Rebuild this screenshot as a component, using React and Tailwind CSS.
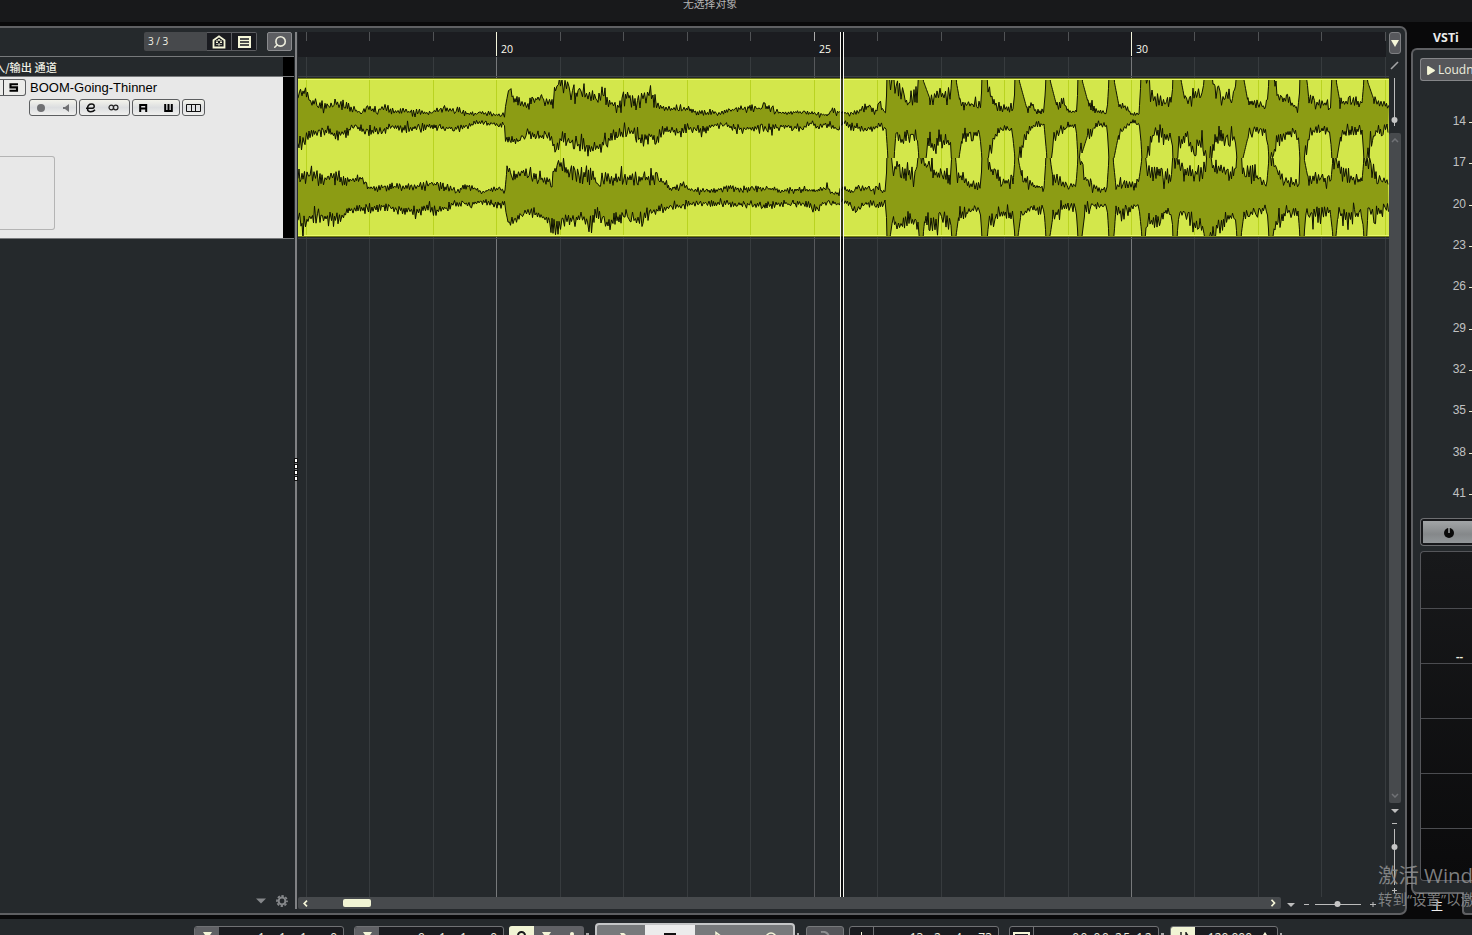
import { FaPlay } from "react-icons/fa";
import { Search } from "lucide-react";

const RULER_START = 298;
const BARS = [306, 369, 433, 496, 560, 623, 687, 750, 814, 877, 941, 1004, 1068, 1131, 1194, 1258, 1321, 1385];
const LABELS = [{ x: 501, n: 20 }, { x: 819, n: 25 }, { x: 1136, n: 30 }];
const LEVELS = [14, 17, 20, 23, 26, 29, 32, 35, 38, 41];

// outline of each channel: x,y pairs, y on a rail (80 / 158 / 236) means clipped
const LEFT_TOP = "298,96 302,94 306,89 310,102 328,105 338,103 345,104 353,109 360,113 367,107 377,111 385,106 392,111 428,113 445,109 458,110 468,114 485,113 498,115 505,113 507,95 510,88 513,99 528,105 538,98 553,103 554,90 561,84 568,88 575,95 583,92 590,100 603,93 610,103 617,107 628,95 635,104 643,97 650,93 657,105 665,109 687,109 700,113 720,113 740,108 760,107 770,108 780,113 793,112 817,114 828,115 833,108 838,112 852,114 863,109 871,105 875,114 879,102 883,113 886,112 887,80 889,80 891,90 893,80 895,84 902,91 908,105 913,95 917,96 918,80 923,80 930,99 937,93 945,96 951,92 952,80 956,80 960,102 968,105 981,106 982,80 987,80 990,90 993,102 1002,108 1014,110 1015,80 1019,80 1027,109 1032,104 1035,111 1044,112 1046,80 1050,80 1057,107 1063,101 1068,112 1077,111 1078,80 1082,80 1088,102 1098,112 1107,113 1109,80 1114,80 1119,106 1125,107 1132,114 1139,114 1141,80 1146,80 1151,98 1162,101 1172,99 1173,80 1181,80 1185,101 1193,97 1203,94 1204,80 1212,80 1216,91 1223,98 1234,96 1236,80 1244,80 1248,102 1257,103 1267,106 1269,80 1274,80 1278,98 1287,100 1297,108 1299,106 1300,80 1307,80 1309,102 1323,104 1331,104 1332,80 1336,80 1340,102 1362,103 1364,80 1367,80 1374,100 1380,105 1389,104";
const LEFT_BOTTOM = "298,142 301,149 308,137 318,131 328,132 335,135 348,131 354,126 365,131 381,131 392,127 405,129 428,126 445,128 458,128 478,123 495,125 504,124 506,139 510,142 522,138 528,133 540,137 551,136 555,150 561,139 575,142 580,147 592,150 603,144 612,137 623,133 633,132 642,142 650,134 657,143 663,130 680,132 688,128 700,131 713,125 727,126 737,129 757,128 767,129 783,126 803,128 812,123 817,127 825,124 838,129 843,123 850,126 865,129 872,128 880,126 886,129 888,158 894,158 896,132 902,141 912,137 917,135 919,158 926,156 928,140 935,150 939,134 943,142 950,142 952,158 959,158 962,138 972,133 980,136 982,158 988,158 990,148 995,136 1002,129 1012,129 1015,158 1018,158 1022,150 1026,134 1035,125 1044,124 1047,158 1051,158 1053,145 1058,133 1065,127 1076,125 1078,158 1082,153 1088,134 1098,125 1107,126 1109,158 1114,158 1119,133 1125,128 1133,122 1140,125 1142,158 1146,158 1150,145 1154,132 1165,138 1172,134 1173,158 1177,158 1182,140 1187,134 1190,150 1197,145 1203,143 1206,158 1210,156 1214,145 1218,136 1225,140 1235,138 1237,158 1243,158 1248,137 1257,128 1267,133 1269,158 1275,150 1278,138 1287,133 1298,131 1300,158 1304,158 1307,146 1310,132 1322,130 1330,131 1332,158 1337,158 1341,134 1362,130 1364,158 1368,155 1372,140 1377,131 1389,128";
const RIGHT_TOP = "298,177 308,173 315,176 323,180 335,175 345,181 362,178 368,188 388,187 422,186 438,184 448,189 458,190 468,186 482,192 495,189 505,190 507,169 513,177 523,171 535,178 552,180 555,164 561,164 565,170 577,174 593,177 600,184 606,173 613,180 620,178 637,179 650,178 658,177 670,189 683,185 692,191 713,191 727,187 740,189 757,188 773,189 783,191 800,190 815,191 827,187 832,193 838,194 842,188 850,192 860,187 872,190 878,187 883,193 886,188 887,158 891,158 893,172 897,164 903,170 910,172 914,180 917,162 919,158 921,158 924,164 935,172 942,178 950,176 952,158 955,158 957,174 965,181 968,185 981,186 982,158 987,158 992,171 1002,180 1013,184 1015,158 1018,158 1022,178 1028,183 1035,186 1044,188 1046,158 1050,158 1053,178 1065,184 1076,185 1078,158 1082,160 1085,178 1093,185 1102,190 1107,187 1109,158 1113,158 1116,187 1122,181 1132,187 1139,180 1142,158 1145,158 1148,173 1160,174 1172,178 1173,158 1177,160 1182,172 1190,174 1205,171 1207,158 1210,158 1213,167 1223,170 1235,175 1237,158 1241,158 1243,175 1253,174 1262,181 1267,181 1269,158 1273,160 1277,172 1290,183 1299,184 1300,158 1304,158 1308,178 1323,179 1331,180 1333,158 1336,163 1343,174 1353,179 1362,181 1364,158 1367,160 1373,173 1383,179 1389,182";
const RIGHT_BOTTOM = "298,218 302,227 310,217 318,217 332,218 343,217 348,210 362,210 382,206 398,209 412,211 428,209 438,211 455,203 472,204 485,201 495,205 505,204 507,218 510,224 525,211 538,215 548,220 556,228 562,221 575,219 583,217 590,229 598,212 605,225 613,222 623,215 630,215 637,222 642,220 650,212 667,208 683,206 693,203 710,203 720,204 750,204 763,206 787,203 803,204 817,209 823,203 833,202 838,204 843,200 850,205 857,209 865,203 883,206 886,199 887,236 890,236 892,222 900,226 907,221 915,222 918,226 919,236 923,236 925,217 932,223 943,221 951,223 952,236 956,236 959,214 968,211 980,208 982,236 987,236 990,221 1002,213 1013,216 1015,236 1018,236 1021,214 1032,209 1044,209 1046,236 1050,236 1053,216 1065,206 1076,208 1078,236 1082,236 1085,212 1095,205 1107,205 1109,236 1114,236 1116,207 1122,216 1133,205 1139,207 1142,236 1145,236 1148,222 1157,222 1165,212 1172,213 1173,236 1177,236 1179,214 1187,214 1193,224 1203,228 1205,236 1209,236 1217,226 1225,220 1235,214 1237,236 1241,236 1244,214 1257,213 1267,208 1269,236 1272,236 1278,220 1287,212 1298,211 1300,236 1304,236 1306,212 1313,216 1330,210 1333,236 1336,236 1338,214 1350,217 1362,213 1364,236 1367,236 1368,205 1372,216 1378,213 1389,207";

function trace(data, center, up, seed) {
    const pts = data.split(" ").map(p => p.split(",").map(Number));
    const rail = y => (up ? y <= center - 38 : y >= center + 38);
    let s = seed;
    const rand = () => {
        s = (s * 16807) % 2147483647;
        return s / 2147483647;
    };
    const out = [];
    let k = 0;
    let side = 1;
    let x = 298;
    while (x <= 1389) {
        while (k < pts.length - 2 && pts[k + 1][0] <= x) k++;
        const [x0, y0] = pts[k];
        const [x1, y1] = pts[k + 1];
        let y = y0 + ((y1 - y0) * (x - x0)) / (x1 - x0);
        const steep = Math.abs(y1 - y0) > 18;
        if (rail(y)) {
            y = up ? center - 44 : center + 44;
        } else if (!steep) {
            const loud = x < 350 || (x > 550 && x < 665) || x > 886;
            const amp = Math.min(loud ? 9 : 5, Math.abs(y - center) * 0.42) + 0.8;
            const r = rand();
            const spike = rand() > 0.9 ? 1.5 : 1;
            y += side * (0.15 + 0.85 * r * r) * amp * spike;
        }
        side = rand() > 0.12 ? -side : side;
        out.push([x, Number(y.toFixed(1))]);
        x += steep ? 0.5 : rand() > 0.45 ? 1 : 1.5;
    }
    return out;
}

const line = pts => pts.map(p => p.join(",")).join(" ");

function Channel({ top, bottom, center, y, height, seed }) {
    const a = trace(top, center, true, seed);
    const b = trace(bottom, center, false, seed + 77);
    return (
        <svg x="298" y={y} width="1091" height={height} viewBox={`298 ${y} 1091 ${height}`}>
            <polygon points={line([...a, ...b.slice().reverse()])} fill="#8c9c14" />
            <polyline points={line(a)} fill="none" stroke="#0d1002" strokeWidth="1" />
            <polyline points={line(b)} fill="none" stroke="#0d1002" strokeWidth="1" />
        </svg>
    );
}

function Arrangement() {
    return (
        <svg className="block" width="1091" height="840" viewBox="298 57 1091 840">
            {BARS.map(x => (
                <rect key={x} x={x} y="57" width="1" height="840" fill={x === 496 || x === 1131 ? "#77797b" : x === 814 ? "#57595c" : "#373b3e"} />
            ))}
            <rect x="298" y="76" width="1091" height="1" fill="#3e4144" />
            <rect x="298" y="238" width="1091" height="1" fill="#3e4144" />
            <rect x="298" y="78" width="1091" height="159" fill="#737f13" />
            <rect x="298" y="79" width="1091" height="157" fill="#eafa6a" />
            <rect x="298" y="80" width="1091" height="155" fill="#d3e74b" />
            {BARS.map(x => <rect key={x} x={x} y="80" width="1" height="155" fill="#b9d321" />)}
            <Channel top={LEFT_TOP} bottom={LEFT_BOTTOM} center={118} y={80} height={78} seed={4211} />
            <Channel top={RIGHT_TOP} bottom={RIGHT_BOTTOM} center={196.5} y={158} height={78} seed={9137} />
        </svg>
    );
}

function Ruler() {
    return (
        <div className="relative h-[25px] w-[1088px] bg-[#1b1c20]">
            {BARS.map(x => (
                <i
                    key={x}
                    className={x === 496 || x === 1131 ? "absolute top-0 h-[24px] w-px bg-[#f4f5dc]" : x === 814 ? "absolute top-0 h-[9px] w-px bg-[#aaa]" : "absolute top-0 h-[9px] w-px bg-[#505255]"}
                    style={{ left: x - RULER_START }}
                />
            ))}
            {LABELS.map(l => (
                <span key={l.n} className="absolute top-[10px] text-[10.5px] leading-[14px] font-medium text-[#fbfbee]" style={{ left: l.x - RULER_START }}>{l.n}</span>
            ))}
        </div>
    );
}

function Pill({ className, children }) {
    return (
        <div className={`flex h-[17px] items-center rounded-[3px] border border-[#5c5e60] bg-linear-to-b from-[#f4f4ec] via-[#dcdee0] to-[#f0f0ee] text-black ${className}`}>
            {children}
        </div>
    );
}

function TrackList() {
    return (
        <div className="flex h-full w-[295px] shrink-0 flex-col">
            <div className="flex h-[28px] items-start pt-[4px] pl-[144px]">
                <div className="flex h-[19px] w-[113px] overflow-hidden rounded-[2px] bg-[#47494c] text-[10px] text-[#f2f2e6]">
                    <span className="w-[63px] pl-[4px] leading-[19px] font-medium">3 / 3</span>
                    <div className="flex w-[50px] rounded-r-[2px] border border-l-0 border-[#5b5c60] bg-[#1a1b20]">
                        <div className="flex w-[25px] items-center justify-center border-r border-[#5b5c60]">
                            <svg width="14" height="14" viewBox="0 0 14 14">
                                <path d="M1.5 5.3 7 1.3l5.5 4v7.2h-11z" fill="none" stroke="#f5f6d8" strokeWidth="1.8" />
                                <path d="M7 4v2M7 8.500v2M4 7.300h2M8 7.300h2" stroke="#f5f6d8" strokeWidth="1.5" />
                                <path d="M4.500 5.500h1M8.500 5.500h1M4.500 9.500h1M8.500 9.500h1" stroke="#f5f6d8" />
                            </svg>
                        </div>
                        <div className="flex flex-1 items-center justify-center">
                            <svg width="13" height="12" viewBox="0 0 13 12">
                                <path d="M0 0h13v12H0z" fill="#f5f6d8" />
                                <path d="M2 3h9M2 6h9M2 9h9" stroke="#15161b" strokeWidth="1.6" />
                            </svg>
                        </div>
                    </div>
                </div>
                <div className="ml-[10px] flex h-[19px] w-[25px] items-center justify-center rounded-[2px] border border-[#8a8b8e] bg-[#5d5e62]">
                    <Search className="size-[14px] -scale-x-100 text-[#ececdc]" strokeWidth={2.8} />
                </div>
            </div>
            <div className="mr-px h-px bg-[#77797b]" />
            <div className="mr-px flex h-[19px] overflow-hidden">
                <div className="w-[283px] shrink-0 overflow-hidden">
                    <div className="-ml-[6px] font-['Noto_Sans_CJK_SC',sans-serif] text-[11.2px] leading-[20px] font-medium whitespace-nowrap text-[#efefe4]">入/输出 通道</div>
                </div>
                <div className="flex-1 bg-black" />
            </div>
            <div className="mr-px h-px bg-[#77797b]" />
            <div className="mr-px flex h-[161px]">
                <div className="w-[283px] bg-[#e8e8e8]">
                    <div className="flex h-[22px] pt-[2px]">
                        <div className="flex h-[17px] w-[26px] rounded-r-[3px] border border-l-0 border-[#5c5e60] bg-[#ececea]">
                            <div className="w-[4px] border-r border-[#3b3c3e]" />
                            <svg className="mt-[3px] ml-[5px]" width="10" height="9" viewBox="0 0 10 9">
                                <path d="M9 1.2H1.500v3.200H8v3.300H.5" fill="none" stroke="#000" strokeWidth="2.1" />
                            </svg>
                        </div>
                        <span className="ml-[4px] font-['Liberation_Sans',Arial,sans-serif] text-[13px] leading-[17px] text-black">BOOM-Going-Thinner</span>
                    </div>
                    <div className="flex gap-[2px] pl-[29px]">
                        <Pill className="w-[48px] justify-between pr-[7px] pl-[7px]">
                            <svg width="8" height="8"><circle cx="4" cy="4" r="4" fill="#707173" /></svg>
                            <svg width="6" height="8" viewBox="0 0 6 8"><path d="M0 3h2l4-3v8L2 5H0z" fill="#707173" /></svg>
                        </Pill>
                        <Pill className="w-[51px] gap-[12px] pl-[6px]">
                            <svg width="10" height="10" viewBox="0 0 10 10"><path d="M0 5.200H6.500C9 5 8.800 1 5.800 1 3 1 1.500 3.300 1.500 5.800c0 2 1.300 3 3.200 3 2 0 3.300-.8 4.300-2" fill="none" stroke="#111" strokeWidth="1.5" /></svg>
                            <svg width="11" height="7" viewBox="0 0 11 7"><circle cx="3.300" cy="3.500" r="2.300" fill="none" stroke="#222" strokeWidth="1.200" /><circle cx="7.700" cy="3.500" r="2.300" fill="none" stroke="#222" strokeWidth="1.200" /></svg>
                        </Pill>
                        <Pill className="w-[48px] justify-between pr-[6px] pl-[6px]">
                            <svg width="9" height="8" viewBox="0 0 9 8"><path d="M1.200 8V1h6v3.500H1.200M7.200 5v3" fill="none" stroke="#000" strokeWidth="2" /></svg>
                            <svg width="9" height="8" viewBox="0 0 9 8"><path d="M1.200 0v7h6.600V0M4.500 0v7" fill="none" stroke="#000" strokeWidth="2" /></svg>
                        </Pill>
                        <Pill className="w-[23px] justify-center">
                            <svg width="15" height="8" viewBox="0 0 15 8"><path d="M.5.500h14v7H.5zM5.500.500v7M9.500.500v7" fill="none" stroke="#111" /></svg>
                        </Pill>
                    </div>
                    <div className="mt-[40px] h-[74px] w-[55px] rounded-r-[3px] border-[1.5px] border-l-0 border-[#b4b4b4]" />
                </div>
                <div className="flex-1 bg-black" />
            </div>
            <div className="mr-px h-px bg-[#77797b]" />
            <div className="flex-1" />
            <div className="flex h-[20px] items-center justify-end gap-[10px] pr-[7px] pb-[5px] text-[#85878a]">
                <svg width="10" height="6"><path d="M0 .5h10L5 5.500z" fill="currentColor" /></svg>
                <svg width="12" height="12" viewBox="0 0 12 12" fill="none" stroke="currentColor">
                    <circle cx="6" cy="6" r="3.400" strokeWidth="2" />
                    <circle cx="6" cy="6" r="5" strokeWidth="1.800" strokeDasharray="2.400 1.527" strokeDashoffset="1.200" />
                </svg>
            </div>
        </div>
    );
}

function VerticalTools() {
    return (
        <div className="flex w-[12px] flex-col items-center text-[#bdbdbd]">
            <div className="flex h-[22px] w-[12px] items-center justify-center rounded-[3px] border border-[#7e7f82] bg-[#57585c]">
                <svg width="8" height="7"><path d="M0 0h8L4 7z" fill="#f5f6d8" /></svg>
            </div>
            <svg className="mt-[7px] mr-px" width="9" height="9"><path d="M1 8 8 1" stroke="#a3a4a6" strokeWidth="1.600" /></svg>
            <svg className="mt-[8px]" width="8" height="48"><path d="M3.500 0v48" stroke="#bcbcbc" /><circle cx="3.500" cy="42" r="3" fill="#c6c6c6" /></svg>
            <div className="mt-[7px] flex h-[670px] w-[12px] flex-col items-center justify-between rounded-[2px] bg-[#474a4d] py-[5px]">
                <svg width="8" height="5"><path d="m1 4 3-3 3 3" fill="none" stroke="#707276" strokeWidth="1.500" /></svg>
                <svg width="8" height="5"><path d="m1 1 3 3 3-3" fill="none" stroke="#707276" strokeWidth="1.500" /></svg>
            </div>
            <svg className="mt-[6px]" width="8" height="4"><path d="M0 0h8L4 4z" fill="currentColor" /></svg>
            <i className="mt-[10px] mr-px h-px w-[5px] bg-[#bdbdbd]" />
            <svg className="mt-[5px]" width="8" height="56"><path d="M3.500 0v56" stroke="#bcbcbc" /><circle cx="3.500" cy="18" r="3" fill="#c6c6c6" /></svg>
            <svg className="mt-[3px] mr-px" width="5" height="5"><path d="M2.500 0v5M0 2.500h5" stroke="#bcbcbc" /></svg>
        </div>
    );
}

function BottomTools() {
    return (
        <div className="flex h-[12px] items-center">
            <div className="ml-px flex h-[12px] w-[983px] items-center rounded-[2px] bg-[#474a4d]">
                <svg className="ml-[5px]" width="5" height="7"><path d="M4 .7 1.200 3.500 4 6.300" fill="none" stroke="#f5f6d8" strokeWidth="1.700" /></svg>
                <div className="ml-[35px] h-[8px] w-[28px] rounded-[2px] bg-[#f1f4d4]" />
                <svg className="mr-[5px] ml-auto" width="6" height="8"><path d="M1.500.700 4.500 4l-3 3.300" fill="none" stroke="#f5f6d8" strokeWidth="1.700" /></svg>
            </div>
            <svg className="mt-[3px] ml-[6px]" width="8" height="4"><path d="M0 0h8L4 4z" fill="#bdbdbd" /></svg>
            <i className="mt-[3px] ml-[9px] h-px w-[5px] bg-[#bdbdbd]" />
            <svg className="mt-[2px] ml-[6px]" width="46" height="8"><path d="M0 4.500h46" stroke="#bcbcbc" /><circle cx="22.500" cy="4" r="3" fill="#c6c6c6" /></svg>
            <svg className="mt-[2px] ml-[9px]" width="6" height="5"><path d="M3 0v5M0 2.500h6" stroke="#bcbcbc" /></svg>
        </div>
    );
}

function Meter() {
    return (
        <div className="flex w-[65px] flex-col overflow-hidden pl-[4px]">
            <div className="h-[22px] pl-[22px] font-['Open_Sans','Noto_Sans',sans-serif] text-[12.400px] leading-[23px] font-bold text-[#ececec]">VSTi</div>
            <div className="flex h-[846px] w-[80px] flex-col rounded-l-[6px] border-2 border-r-0 border-[#5f6063] bg-[#25292c] pl-[7px]">
                <div className="mt-[8px] flex h-[23px] items-center rounded-l-[3px] border border-r-0 border-[#858689] bg-[#55565a] pt-px pl-[6px] text-[12px] text-[#ededdf]">
                    <FaPlay className="mr-[3px] h-[9px] w-[8px] shrink-0 text-[#f5f6d8]" />Loudness
                </div>
                <div className="mt-[21px] flex h-[413.300px] flex-col">
                    {LEVELS.map(n => (
                        <div key={n} className="flex h-[41.330px] items-start">
                            <span className="-mt-[1px] h-[40px] w-[46px] text-right font-['Liberation_Sans',Arial,sans-serif] text-[12px] leading-[40px] text-[#c0c1c2]">{n}</span>
                            <i className="mt-[20px] ml-[3px] h-px w-[6px] bg-[#e6e7cb]" />
                        </div>
                    ))}
                </div>
                <div className="mt-[2.700px] h-[28px] shrink-0 rounded-l-[4px] border border-r-0 border-[#6d6e71] bg-[#17181b] p-[2px] pr-0">
                    <div className="flex h-[22px] items-center bg-linear-to-b from-[#a2a5a7] via-[#85888a] via-60% to-[#93979a] pt-[2px] pl-[20px]">
                        <svg width="12" height="12"><circle cx="6" cy="6" r="5" fill="#0a0a0a" /><path d="M6 0v6" stroke="#a0a3a5" strokeWidth="1.500" /></svg>
                    </div>
                </div>
                <div className="mt-[5px] h-[330px] shrink-0 rounded-l-[4px] border border-r-0 border-[#55565a] bg-linear-to-b from-[#18191b] to-[#0b0b0c]">
                    <div className="h-[57px] border-b border-[#4b4c50]" />
                    <div className="h-[55px] border-b border-[#4b4c50] pt-[40px] pl-[35px] text-[11px] leading-[14px] font-bold text-[#ededdf]">--</div>
                    <div className="h-[55px] border-b border-[#4b4c50]" />
                    <div className="h-[55px] border-b border-[#4b4c50]" />
                    <div className="h-[55px] border-b border-[#4b4c50]" />
                </div>
            </div>
            <div className="flex h-[21px] pl-[20px] font-['Noto_Sans_CJK_SC',sans-serif] text-[12px] leading-[22px] text-[#f0f0f0]">
                主<div className="-mt-[2px] ml-[19px] h-[23px] w-[20px] shrink-0 rounded-bl-[4px] border-b-2 border-l-2 border-[#5f6063] bg-[#25292c]" />
            </div>
        </div>
    );
}

function Field({ className, icon, iconClass, children }) {
    return (
        <div className={`mt-[7px] flex h-[24px] shrink-0 overflow-hidden rounded-t-[3px] border border-[#707174] bg-[#1a1b1f] ${className}`}>
            <div className={`flex w-[24px] shrink-0 justify-center pt-[5px] ${iconClass}`}>{icon}</div>
            <div className="flex flex-1 justify-end pt-[2px] text-[12px] leading-[17px] text-[#f0f0e0]">{children}</div>
        </div>
    );
}

function Position({ parts }) {
    return parts.map((p, i) => (
        <span key={i} className={i === 3 ? "w-[29px] pr-[6px] text-right" : "w-[21px] text-center"}>{p}</span>
    ));
}

const down = <svg width="9" height="9"><path d="M0 0h9L4.500 7z" fill="#f5f6d8" /></svg>;

function Transport() {
    return (
        <div className="flex h-[16px] overflow-hidden bg-[#25292c]">
            <Field className="ml-[194px] w-[150px]" icon={down} iconClass="bg-[#606165]"><Position parts={[1, 1, 1, 0]} /></Field>
            <Field className="ml-[10px] w-[150px]" icon={down} iconClass="bg-[#606165]"><Position parts={[9, 1, 1, 0]} /></Field>
            <div className="mt-[7px] ml-[5px] flex h-[24px] w-[75px] overflow-hidden rounded-t-[3px] bg-[#606165]">
                <div className="flex w-[25px] justify-center bg-[#f1f4d4] pt-[5px]"><svg width="9" height="9"><circle cx="4.500" cy="4.500" r="3.500" fill="none" stroke="#17181b" strokeWidth="2" /></svg></div>
                <div className="flex w-[25px] justify-center pt-[6px]">{down}</div>
                <div className="flex w-[25px] justify-center pt-[6px]"><svg width="4" height="8"><circle cx="2" cy="2" r="2" fill="#f5f6d8" /></svg></div>
            </div>
            <i className="mt-[14px] ml-[2px] h-[3px] w-[3px] bg-[#aaa]" />
            <div className="mt-[4px] ml-[6px] flex h-[30px] w-[200px] shrink-0 rounded-[4px] border-2 border-[#c5c6c7] bg-[#77797b] text-[#f5f6d8]">
                <div className="flex w-[48px] justify-center pt-[8px] pl-[5px]"><svg width="12" height="12"><path d="M2 0h4l5 5H5z" fill="currentColor" /></svg></div>
                <div className="flex w-[50px] justify-center bg-[#ececec] pt-[8px]"><svg width="12" height="12"><path d="M0 0h12v12H0z" fill="#111" /></svg></div>
                <div className="flex w-[48px] justify-center pt-[6px]"><svg width="12" height="14"><path d="M3 1.500v12l8-6z" fill="none" stroke="currentColor" strokeWidth="1.500" /></svg></div>
                <div className="flex w-[50px] justify-center pt-[7px] pl-[5px]"><svg width="12" height="12"><circle cx="6" cy="6" r="5" fill="none" stroke="currentColor" strokeWidth="1.500" /></svg></div>
            </div>
            <i className="mt-[14px] ml-[2px] h-[3px] w-[2px] bg-[#aaa]" />
            <div className="mt-[7px] ml-[7px] flex h-[24px] w-[38px] shrink-0 justify-center rounded-[3px] border border-[#77797b] bg-[#55565a] pt-[4px]">
                <svg width="12" height="12"><path d="M2 1c5-1 8 2 8 6" fill="none" stroke="#8d8e90" strokeWidth="2" /></svg>
            </div>
            <Field className="ml-[5px] w-[150px]" icon={<svg width="9" height="9"><path d="M4.500 0v9" stroke="#f5f6d8" /></svg>} iconClass="border-r border-[#707174]"><Position parts={[13, 2, 4, 73]} /></Field>
            <Field className="ml-[10px] w-[150px]" icon={<svg width="17" height="9"><path d="M1 9V1h15v8" fill="none" stroke="#f5f6d8" strokeWidth="2" /></svg>} iconClass="border-r border-[#707174]">
                <span className="pr-[5px] tracking-[1.500px]">00:00:25:12</span>
            </Field>
            <i className="mt-[14px] ml-[2px] h-[3px] w-[3px] bg-[#aaa]" />
            <Field className="ml-[6px] w-[108px]" icon={<svg width="12" height="10"><path d="M4 0v10M9 0v10M9 1l3 4" fill="none" stroke="#17181b" strokeWidth="1.400" /></svg>} iconClass="bg-[#f1f4d4]">
                120.000<svg className="mt-[3px] mr-[8px] ml-[9px]" width="8" height="8"><path d="M4 0l4 6H0z" fill="#f5f6d8" /></svg>
            </Field>
            <i className="mt-[14px] ml-[2px] h-[3px] w-[2px] bg-[#aaa]" />
        </div>
    );
}

export default function App() {
    return (
        <div className="relative flex h-[935px] w-[1472px] flex-col overflow-hidden bg-[#09090a] font-['Open_Sans','Noto_Sans',sans-serif]">
            <div className="flex h-[22px] shrink-0 overflow-hidden bg-[#18191b] pl-[683px]">
                <span className="-mt-[6px] font-['Noto_Sans_CJK_SC',sans-serif] text-[10.800px] leading-[18px] text-[#b4b4b4]">无选择对象</span>
            </div>
            <div className="flex h-[897px] shrink-0 pt-[4px]">
                <div className="flex h-[889px] w-[1407px] shrink-0 rounded-r-[7px] border-2 border-l-0 border-[#5f6063] bg-[#25292c]">
                    <TrackList />
                    <div className="my-[4px] flex w-[2px] shrink-0 flex-col bg-[#808184] pt-[427px]">
                        {[0, 1, 2, 3].map(i => <i key={i} className="mb-[3px] h-[3px] w-[2px] shrink-0 bg-white outline outline-[#111]" />)}
                    </div>
                    <div className="my-[4px] flex flex-1 flex-col">
                        <div className="flex h-[865px]">
                            <div className="relative ml-px w-[1091px] shrink-0">
                                <Ruler />
                                <Arrangement />
                                <div className="absolute top-0 left-[542px] h-[865px] w-[4px] border-x border-[#f4f4f0] bg-black/75" />
                            </div>
                            <VerticalTools />
                        </div>
                        <BottomTools />
                    </div>
                </div>
                <Meter />
            </div>
            <Transport />
            {/* activation overlay */}
            <div className="absolute top-[862px] left-[1378px] font-['Open_Sans','Noto_Sans_CJK_SC',sans-serif] whitespace-nowrap text-[#929394]/85">
                <div className="text-[20.400px] leading-[27px]">激活 Windows</div>
                <div className="text-[14.500px] leading-[21px]">转到“设置”以激活 Windows。</div>
            </div>
        </div>
    );
}
